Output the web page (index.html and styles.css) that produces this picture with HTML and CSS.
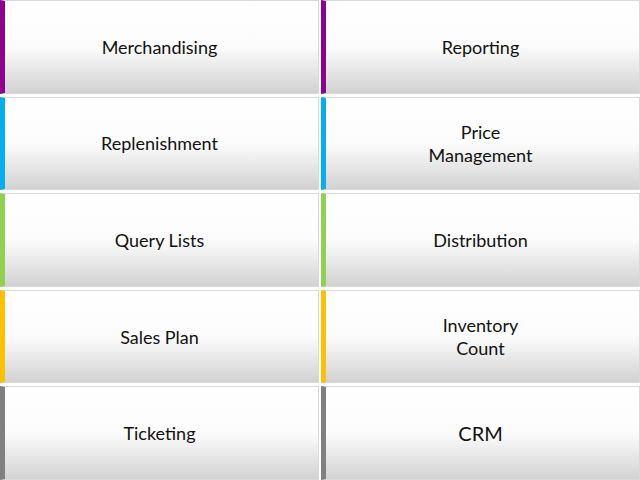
FILE: index.html
```html
<!DOCTYPE html>
<html lang="en">
<head>
  <meta charset="UTF-8">
  <title>Menu</title>
  <link rel="stylesheet" href="styles.css">
</head>
<body>
  <div class="menu">
    <a class="tile purple"><span>Merchandising</span></a>
    <a class="tile purple"><span>Reporting</span></a>
    <a class="tile blue"><span>Replenishment</span></a>
    <a class="tile blue"><span>Price<br>Management</span></a>
    <a class="tile green"><span>Query Lists</span></a>
    <a class="tile green"><span>Distribution</span></a>
    <a class="tile yellow"><span>Sales Plan</span></a>
    <a class="tile yellow"><span>Inventory<br>Count</span></a>
    <a class="tile gray"><span>Ticketing</span></a>
    <a class="tile gray big"><span>CRM</span></a>
  </div>
</body>
</html>
```

FILE: styles.css
```css
* {
  margin: 0;
  padding: 0;
  box-sizing: border-box;
}
body {
  background-color: #fff;
  font-family: 'Lato', 'Open Sans', sans-serif;
  color: #111;
}
.menu {
  width: 640px;
  height: 480px;
  display: grid;
  grid-template-columns: 1fr 1fr;
  grid-template-rows: repeat(5, 1fr);
  column-gap: 2px;
  row-gap: 3px;
}
.tile {
  display: flex;
  align-items: center;
  justify-content: center;
  text-align: center;
  padding-right: 4px;
  border-left: 5px solid #808080;
  border-top: 1px solid #d9d9d9;
  border-right: 1px solid #d9d9d9;
  border-bottom: 1px solid #d9d9d9;
  background: linear-gradient(to bottom, #fff 0%, #fcfcfc 50%, #d2d2d2 100%);
  font-size: 18px;
  line-height: 23px;
  cursor: pointer;
}
.tile span {
  display: block;
  margin-top: 1px;
}
.purple { border-left-color: #900090; }
.blue { border-left-color: #00b0f0; }
.green { border-left-color: #92d050; }
.yellow { border-left-color: #ffc000; }
.gray { border-left-color: #808080; }
.big {
  font-size: 20px;
}
```
